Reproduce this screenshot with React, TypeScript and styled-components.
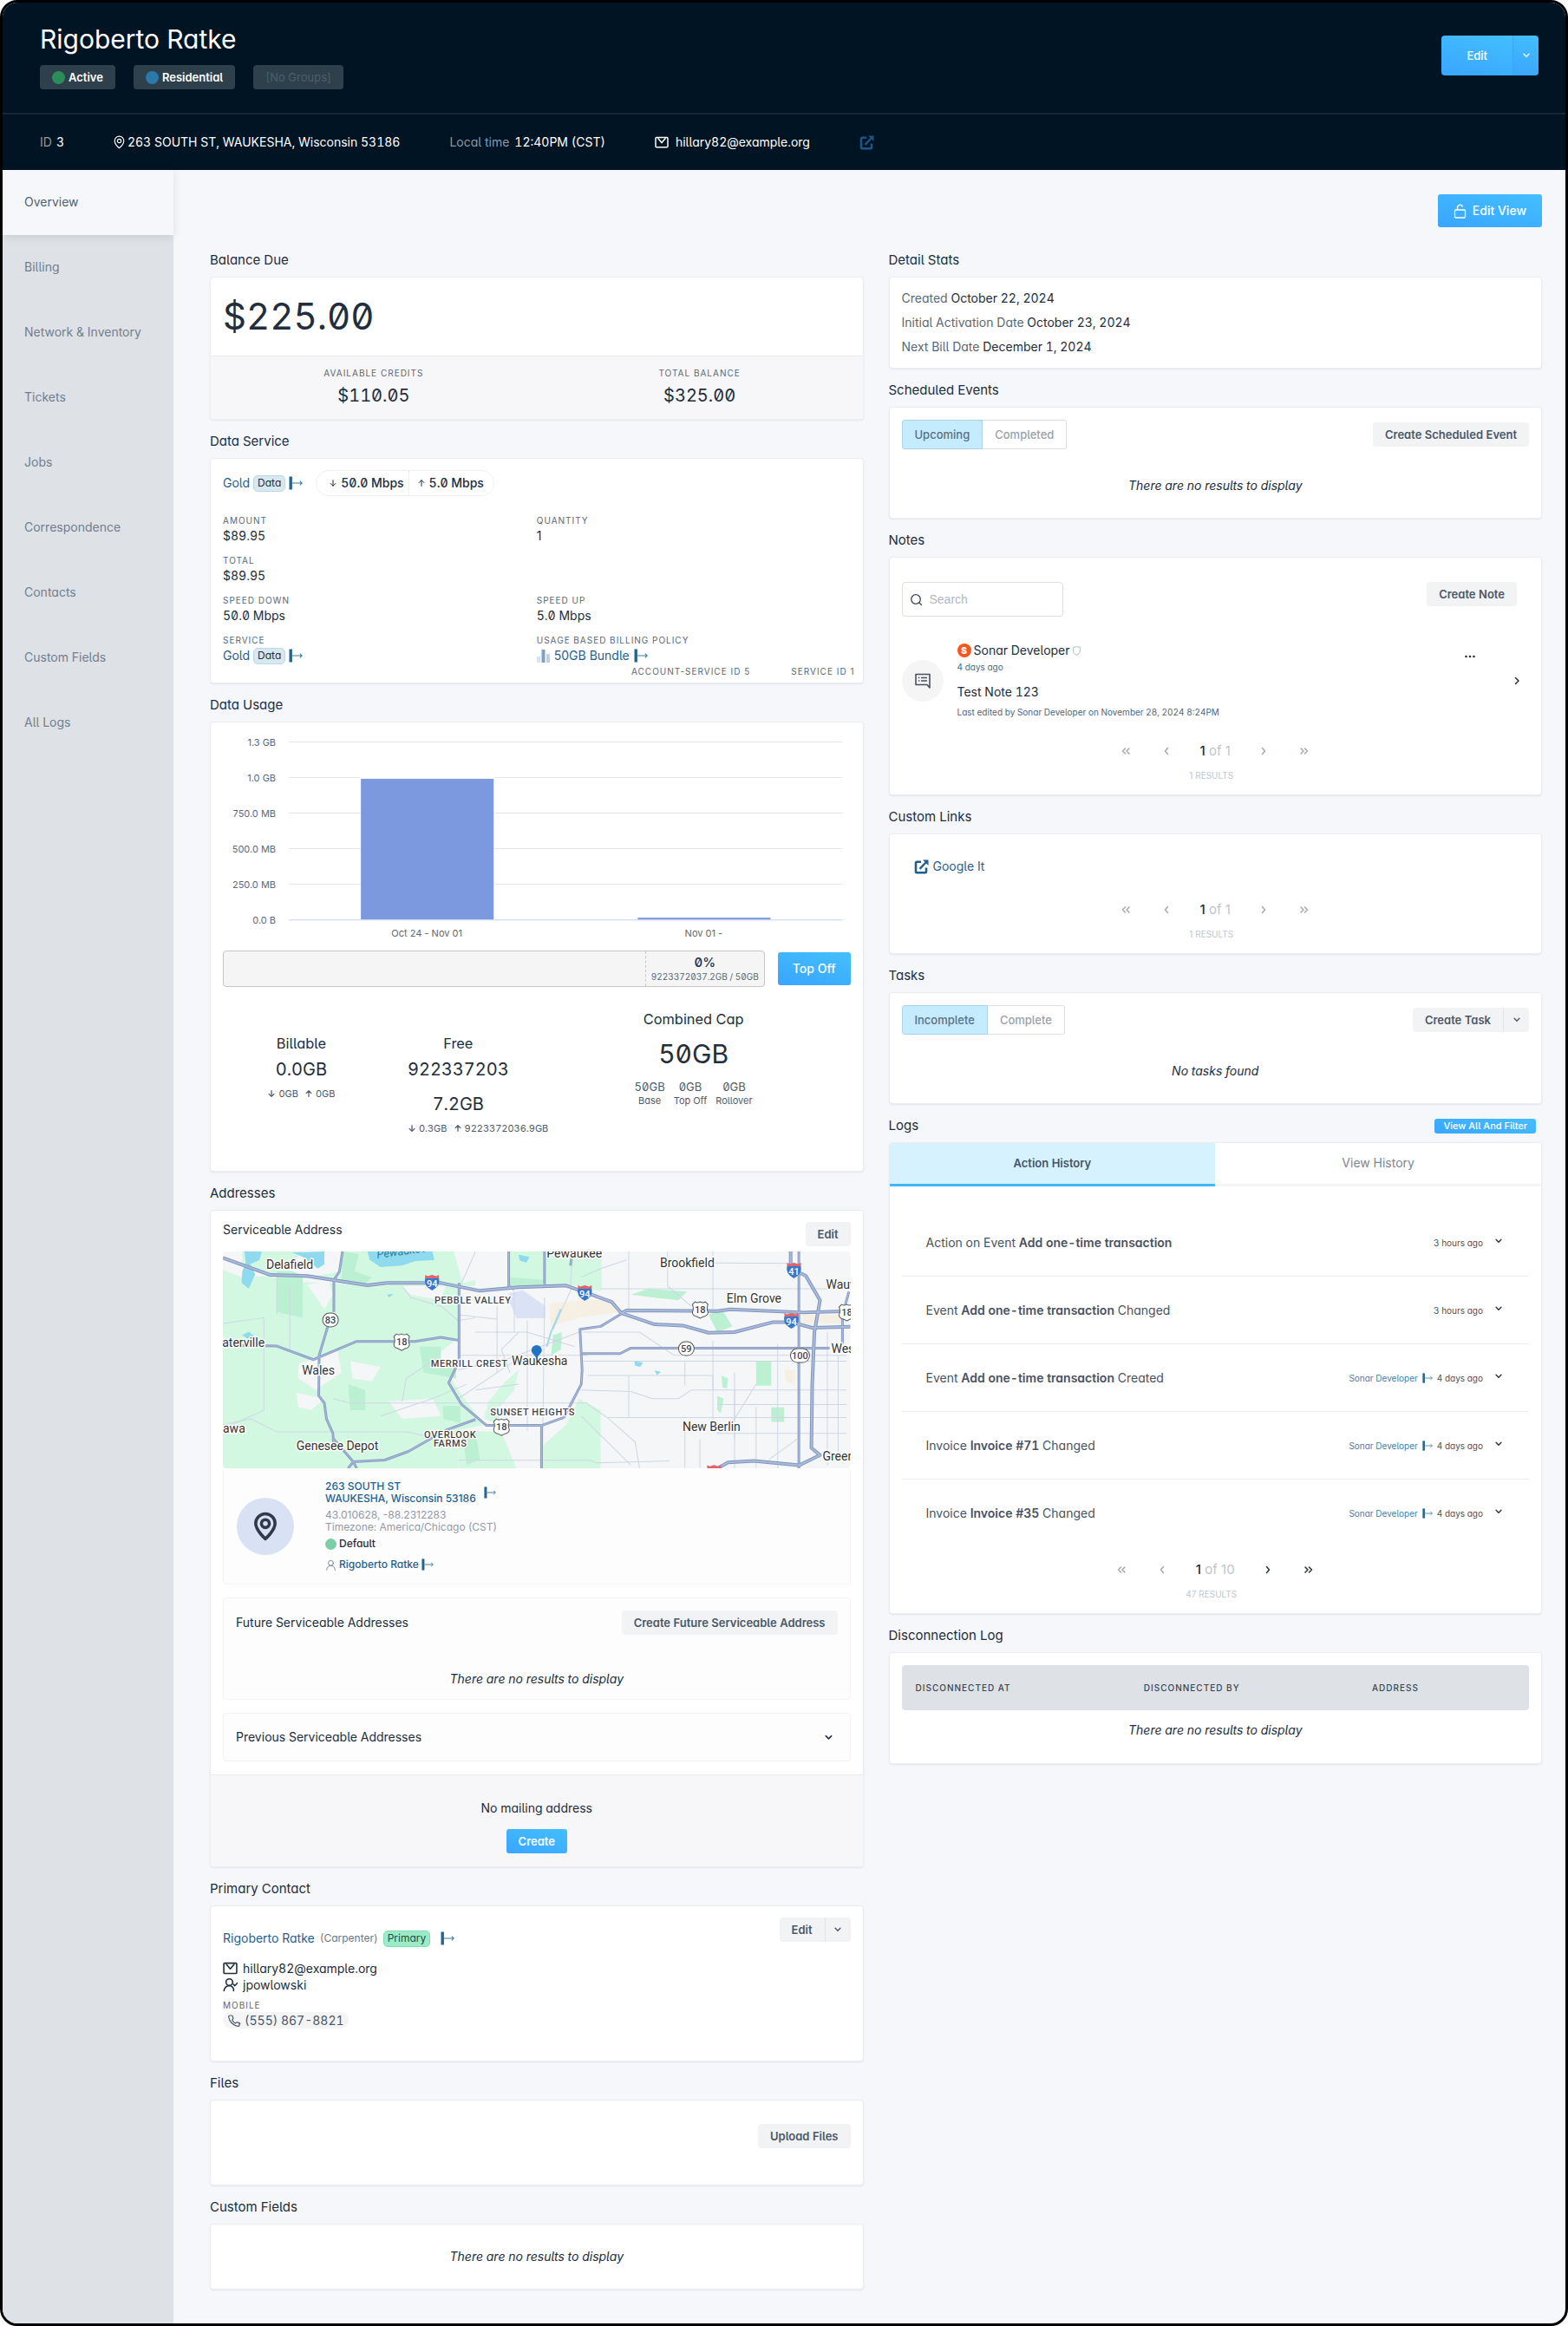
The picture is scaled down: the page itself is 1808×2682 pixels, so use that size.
import React from "react";
import styled, { createGlobalStyle, css } from "styled-components";

const GlobalStyle = createGlobalStyle`
  * { box-sizing: border-box; }
  html { background: #fff; }
  body {
    margin: 0;
    color: #222d3d;
    font-family: Inter, "Liberation Sans", sans-serif;
    font-feature-settings: "cv05", "cv11", "tnum";
    font-size: 14px;
    line-height: 20px;
    -webkit-font-smoothing: antialiased;
  }
  h1, h2, h3, p, ul, dl, dd { margin: 0; padding: 0; font-weight: 400; }
  ul { list-style: none; }
  button, input { font: inherit; font-feature-settings: inherit; }
  button { cursor: pointer; }
  a { color: #1f5f8f; text-decoration: none; }
  svg { display: block; flex: none; }
`;

const slashed = css`
  font-feature-settings: "cv05", "cv11", "tnum", "zero";
`;

const proportional = css`
  font-feature-settings: "cv05", "cv11";
`;

/* ---------- shell ---------- */

const Frame = styled.div`
  min-height: 100vh;
  display: flex;
  flex-direction: column;
  border: 3px solid #000;
  border-radius: 20px;
  overflow: hidden;
  background: #f6f7fb;
`;

const Header = styled.header`
  background: #001424;
  color: #fff;
`;

const HeaderTop = styled.div`
  display: flex;
  justify-content: space-between;
  align-items: center;
  padding: 21px 31px 27px 43px;
  border-bottom: 2px solid #15283a;
`;

const AccountName = styled.h1`
  font-size: 30px;
  line-height: 42px;
`;

const TagRow = styled.div`
  display: flex;
  gap: 21px;
  padding-top: 9px;
`;

const HeaderTag = styled.span<{ $muted?: boolean }>`
  display: flex;
  align-items: center;
  gap: 4px;
  height: 28px;
  padding: 0 14px;
  border-radius: 4px;
  background: #2e404b;
  color: ${(p) => (p.$muted ? "#4d5e6b" : "#fff")};
  font-size: 13px;
  font-weight: ${(p) => (p.$muted ? 400 : 600)};
`;

const Dot = styled.span<{ $color: string; $size: number }>`
  width: ${(p) => p.$size}px;
  height: ${(p) => p.$size}px;
  border-radius: 50%;
  background: ${(p) => p.$color};
`;

const InfoBar = styled.div`
  display: flex;
  align-items: center;
  gap: 57px;
  height: 64px;
  padding: 0 43px;
`;

const InfoItem = styled.span<{ $gap: number }>`
  display: flex;
  align-items: center;
  gap: ${(p) => p.$gap}px;
`;

const InfoLabel = styled.span`
  color: #8c98a4;
`;

const Body = styled.div`
  display: flex;
  flex: 1;
`;

const SideNav = styled.nav`
  width: 197px;
  flex: none;
  background: #dee1e6;
`;

const NavLink = styled.a<{ $active?: boolean }>`
  display: flex;
  align-items: center;
  height: 75px;
  padding: 0 0 2px 25px;
  color: ${(p) => (p.$active ? "#526071" : "#727f8c")};
  background: ${(p) => (p.$active ? "#f6f7fb" : "transparent")};
  box-shadow: ${(p) => (p.$active ? "0 2px 10px rgba(0, 0, 0, 0.1)" : "none")};
`;

const Main = styled.main`
  flex: 1;
  min-width: 0;
  padding: 28px 27px 39px 42px;
`;

const Toolbar = styled.div`
  display: flex;
  justify-content: flex-end;
  padding-bottom: 26px;
`;

const Columns = styled.div`
  display: grid;
  grid-template-columns: minmax(0, 1fr) minmax(0, 1fr);
  gap: 29px;
  align-items: start;
`;

const Column = styled.div`
  display: flex;
  flex-direction: column;
  gap: 13px;
`;

const SectionHead = styled.div`
  display: flex;
  align-items: center;
  justify-content: space-between;
  height: 24px;
  margin-bottom: 7px;
  padding-right: 7px;
`;

const SectionTitle = styled.h2`
  font-size: 15px;
  line-height: 24px;
`;

const Card = styled.div`
  border: 1px solid #ebedf0;
  border-radius: 4px;
  background: #fff;
  box-shadow: 0 1px 2px rgba(20, 30, 50, 0.08);
  overflow: hidden;
`;

const Padded = styled.div<{ $top: number; $bottom: number }>`
  padding: ${(p) => p.$top}px 14px ${(p) => p.$bottom}px;
`;

/* ---------- controls ---------- */

const blue = css`
  border: 0;
  color: #fff;
  background: linear-gradient(15deg, #3aa5ff, #43bfff);
`;

const PrimaryButton = styled.button<{ $height: number; $pad: number; $size?: number }>`
  ${blue}
  display: inline-flex;
  align-items: center;
  justify-content: center;
  gap: 7px;
  flex: none;
  height: ${(p) => p.$height}px;
  padding: 0 ${(p) => p.$pad}px;
  border-radius: 3px;
  font-size: ${(p) => p.$size ?? 14}px;
  font-weight: ${(p) => (p.$size === 13 ? 600 : 500)};
`;

const SplitGroup = styled.div<{ $blue?: boolean }>`
  display: flex;
  flex: none;
  height: ${(p) => (p.$blue ? 46 : 28)}px;
  border-radius: 4px;
  overflow: hidden;
  button {
    display: flex;
    align-items: center;
    justify-content: center;
    border: 0;
    font-size: 13px;
    ${(p) =>
      p.$blue
        ? css`
            ${blue}
            font-weight: 500;
          `
        : css`
            background: #f2f3f5;
            color: #4a5868;
            font-weight: 600;
          `}
  }
  button:first-child { padding: 0 ${(p) => (p.$blue ? 29 : 14)}px; }
  button:last-child {
    width: 30px;
    padding: 0;
    border-left: 1px solid ${(p) => (p.$blue ? "#3aa6fa" : "#e3e5e8")};
  }
`;

const GreyButton = styled.button`
  flex: none;
  height: 28px;
  padding: 0 14px;
  border: 0;
  border-radius: 4px;
  background: #f2f3f5;
  color: #4a5868;
  font-size: 13px;
  font-weight: 600;
`;

const Toggle = styled.div`
  display: flex;
  height: 34px;
`;

const ToggleItem = styled.button<{ $active?: boolean }>`
  padding: 0 14px;
  border: 1px solid ${(p) => (p.$active ? "#a9d3ea" : "#dcdfe4")};
  color: ${(p) => (p.$active ? "#5b7083" : "#9aa1a9")};
  background: ${(p) => (p.$active ? "#c5ebff" : "#fff")};
  border-radius: ${(p) => (p.$active ? "3px 0 0 3px" : "0 3px 3px 0")};
  border-left-width: ${(p) => (p.$active ? 1 : 0)}px;
  font-size: 13px;
  font-weight: 500;
`;

const Bar = styled.div<{ $align?: string; $gap?: number }>`
  display: flex;
  justify-content: space-between;
  align-items: ${(p) => p.$align ?? "center"};
  gap: ${(p) => p.$gap ?? 0}px;
`;

const EmptyText = styled.p<{ $gap?: number }>`
  padding-top: ${(p) => p.$gap ?? 0}px;
  text-align: center;
  font-style: italic;
  font-size: 14px;
  line-height: 20px;
`;

const Label = styled.span<{ $tight?: boolean }>`
  ${(p) => p.$tight && proportional}
  display: block;
  color: #5a6877;
  font-size: 10px;
  line-height: 16px;
  letter-spacing: 1px;
  text-transform: uppercase;
`;

const PlainIconButton = styled.button<{ $faded?: boolean }>`
  display: flex;
  align-items: center;
  justify-content: center;
  padding: 0;
  border: 0;
  background: none;
  color: ${(p) => (p.$faded ? "#a3a9b1" : "#26323f")};
`;

/* ---------- icons ---------- */

type StrokeProps = { size?: number; color?: string; width?: number; d: string };
const Stroke = ({ size = 16, color = "currentColor", width = 2, d }: StrokeProps) => (
  <svg width={size} height={size} viewBox="0 0 24 24" fill="none" stroke={color}
    strokeWidth={width} strokeLinecap="round" strokeLinejoin="round" aria-hidden="true">
    <path d={d} />
  </svg>
);

const CHEVRON_DOWN = "M5 8l7 7 7-7";
const Chevron = ({ size = 10 }: { size?: number }) => <Stroke size={size} width={3.4} d={CHEVRON_DOWN} />;

const GoIcon = ({ size = 16 }: { size?: number }) => (
  <svg width={size} height={size} viewBox="0 0 16 16" aria-hidden="true">
    <rect x="0.5" y="0.5" width="3.4" height="15" fill="#24648f" />
    <path d="M4 8H15M12.800 5.600L15.200 8l-2.400 2.400" fill="none" stroke="#3f7ca6" strokeWidth="1.100" />
  </svg>
);

const PinIcon = ({ size, height, color, width }: { size: number; height: number; color: string; width: number }) => (
  <svg width={size} height={height} viewBox="0 0 26 32" fill="none" stroke={color} strokeWidth={width} aria-hidden="true">
    <path d="M13 29.500C13 29.500 2.500 20.400 2.500 12.800a10.500 10.500 0 0 1 21 0C23.500 20.400 13 29.500 13 29.500Z" strokeLinejoin="round" />
    <circle cx="13" cy="13" r="4.300" />
  </svg>
);

const MailIcon = ({ size = 16 }: { size?: number }) => (
  <svg width={size} height={size} viewBox="0 0 16 16" fill="none" stroke="currentColor" strokeWidth="1.500" strokeLinejoin="round" aria-hidden="true">
    <rect x="1" y="2.500" width="14" height="11.200" rx="1" />
    <path d="M3.500 3.200L8 8.600l4.500-5.400" />
  </svg>
);

const ExternalIcon = ({ color, size = 17 }: { color: string; size?: number }) => (
  <svg width={size} height={size} viewBox="0 0 17 17" fill="none" stroke={color} aria-hidden="true">
    <path d="M8 2.800H3.200a1.200 1.200 0 0 0-1.200 1.200v10a1.200 1.200 0 0 0 1.200 1.200h9.600a1.200 1.200 0 0 0 1.200-1.200V9.500" strokeWidth="2.600" />
    <path d="M6.500 10.800L13.500 3.500" strokeWidth="2.400" />
    <path d="M10 0.500h6.500V7z" fill={color} stroke="none" />
  </svg>
);

const UserIcon = ({ check, size = 14, width = 1.2 }: { check?: boolean; size?: number; width?: number }) => (
  <svg width={size} height={size} viewBox="0 0 16 16" fill="none" stroke="currentColor" strokeWidth={width} strokeLinecap="round" aria-hidden="true">
    <circle cx={check ? 7 : 8} cy="5.200" r="3.600" />
    <path d={check ? "M1.200 14.500c.6-3.400 2.400-5.400 5.800-5.600 2.400.1 3.800 1.400 4.600 3.600v2" : "M2 15c.5-4 2.800-6 6-6s5.500 2 6 6"} />
    {check && <path d="M11.500 7.600l1.500 1.500 2.500-2.800" />}
  </svg>
);

const LockIcon = () => (
  <svg width="15" height="17" viewBox="0 0 15 17" fill="none" stroke="#fff" strokeWidth="1.300" aria-hidden="true">
    <rect x="1.500" y="7" width="12" height="9" rx="1" />
    <path d="M4.500 7V4.200a3 3 0 0 1 5.800-1" strokeLinecap="round" />
  </svg>
);

const ARROW_DOWN = "M12 4v16M5 13l7 7 7-7";
const ARROW_UP = "M12 20V4M5 11l7-7 7 7";

/* ---------- small shared pieces ---------- */

const Section = ({ title, action, children }: { title: string; action?: React.ReactNode; children: React.ReactNode }) => (
  <section>
    <SectionHead>
      <SectionTitle>{title}</SectionTitle>
      {action}
    </SectionHead>
    <Card>{children}</Card>
  </section>
);

const Chip = styled.span<{ $green?: boolean }>`
  display: inline-flex;
  align-items: center;
  height: 19px;
  padding: 0 4px;
  border-radius: 5px;
  font-size: 12px;
  border: 1px solid ${(p) => (p.$green ? "#7fdcb3" : "#bfd8e3")};
  background: ${(p) => (p.$green ? "#9aecc8" : "#d6e8f0")};
  color: ${(p) => (p.$green ? "#1f4d3c" : "#222d3d")};
`;

const Inline = styled.span<{ $gap: number; $size?: number }>`
  display: flex;
  align-items: center;
  gap: ${(p) => p.$gap}px;
  font-size: ${(p) => p.$size ?? 14}px;
`;

const ServiceLink = () => (
  <Inline $gap={4}>
    <a href="#gold">Gold</a>
    <Chip>Data</Chip>
    <GoIcon />
  </Inline>
);

const Pager = styled.div`
  ${proportional}
  display: flex;
  flex-direction: column;
  align-items: center;
  gap: 9px;
`;

const PagerRow = styled.div`
  display: flex;
  height: 24px;
  ${PlainIconButton} { width: 47px; }
`;

const PagerText = styled.span`
  padding: 0 15px;
  color: #bfc4ca;
  font-size: 15px;
  line-height: 24px;
  b { color: #222d3d; font-weight: 500; }
`;

const PagerCount = styled.span`
  padding-right: 9px;
  color: #c2c6cd;
  font-size: 10px;
  line-height: 14px;
`;

const Pagination = ({ pages, results, open }: { pages: number; results: number; open?: boolean }) => (
  <Pager>
    <PagerRow>
      <PlainIconButton $faded aria-label="First page"><Stroke size={12} width={3} d="M11 6l-6 6 6 6M20 6l-6 6 6 6" /></PlainIconButton>
      <PlainIconButton $faded aria-label="Previous page"><Stroke size={12} width={3} d="M15 5l-6 7 6 7" /></PlainIconButton>
      <PagerText><b>1</b> of {pages}</PagerText>
      <PlainIconButton $faded={!open} aria-label="Next page"><Stroke size={12} width={3} d="M9 5l6 7-6 7" /></PlainIconButton>
      <PlainIconButton $faded={!open} aria-label="Last page"><Stroke size={12} width={3} d="M4 6l6 6-6 6M13 6l6 6-6 6" /></PlainIconButton>
    </PagerRow>
    <PagerCount>{results} RESULTS</PagerCount>
  </Pager>
);

/* ---------- balance ---------- */

const Amount = styled.div`
  ${slashed}
  padding: 15px 14px;
  font-size: 42px;
  line-height: 60px;
`;

const Totals = styled.dl`
  display: grid;
  grid-template-columns: 1fr 1fr;
  padding: 11px 0 15px;
  border-top: 1px solid #e9ebee;
  background: #f7f7f9;
  text-align: center;
  dd {
    ${slashed}
    padding-top: 6px;
    font-size: 20px;
    line-height: 24px;
  }
`;

const Balance = () => (
  <Section title="Balance Due">
    <Amount>$225.00</Amount>
    <Totals>
      <div><dt><Label $tight>Available credits</Label></dt><dd>$110.05</dd></div>
      <div><dt><Label $tight>Total balance</Label></dt><dd>$325.00</dd></div>
    </Totals>
  </Section>
);

/* ---------- data service ---------- */

const ServiceHead = styled.div`
  display: flex;
  align-items: center;
  gap: 15px;
  padding-bottom: 20px;
`;

const SpeedPill = styled.div`
  ${slashed}
  display: flex;
  height: 30px;
  border: 1px solid #eff0f2;
  border-radius: 15px;
  font-weight: 500;
  span { display: flex; align-items: center; gap: 4px; padding: 0 5px 0 14px; }
  span + span { padding: 0 11px 0 9px; border-left: 1px dotted #dfe2e6; }
`;

const Fields = styled.dl`
  display: grid;
  grid-template-columns: 1fr 1fr;
  row-gap: 10px;
`;

const Field = styled.div<{ $wide?: boolean; $plain?: boolean }>`
  grid-column: ${(p) => (p.$wide ? "1 / -1" : "auto")};
  dd { ${(p) => (p.$plain ? proportional : slashed)} height: 20px; }
`;

const IdLine = styled.div`
  display: flex;
  justify-content: flex-end;
  gap: 47px;
  padding-right: 9px;
  padding-bottom: 5px;
`;

const PolicyIcon = () => (
  <svg width="15" height="16" viewBox="0 0 15 16" aria-hidden="true">
    <rect x="0" y="9" width="4" height="7" fill="#dbe4ec" />
    <rect x="5.500" y="1" width="4" height="15" fill="#7fa3be" />
    <rect x="11" y="6" width="4" height="10" fill="#c0d2df" />
  </svg>
);

const DataService = () => (
  <Section title="Data Service">
    <Padded $top={13} $bottom={0}>
      <ServiceHead>
        <ServiceLink />
        <SpeedPill>
          <span><Stroke size={10} d={ARROW_DOWN} width={2.4} />50.0 Mbps</span>
          <span><Stroke size={10} d={ARROW_UP} width={2.4} />5.0 Mbps</span>
        </SpeedPill>
      </ServiceHead>
      <Fields>
        <Field><dt><Label>Amount</Label></dt><dd>$89.95</dd></Field>
        <Field $plain><dt><Label>Quantity</Label></dt><dd>1</dd></Field>
        <Field $wide><dt><Label>Total</Label></dt><dd>$89.95</dd></Field>
        <Field><dt><Label>Speed down</Label></dt><dd>50.0 Mbps</dd></Field>
        <Field><dt><Label>Speed up</Label></dt><dd>5.0 Mbps</dd></Field>
        <Field><dt><Label>Service</Label></dt><dd><ServiceLink /></dd></Field>
        <Field $plain>
          <dt><Label>Usage based billing policy</Label></dt>
          <dd><Inline $gap={5}><PolicyIcon /><a href="#policy">50GB Bundle</a><GoIcon /></Inline></dd>
        </Field>
      </Fields>
    </Padded>
    <IdLine>
      <Label $tight>Account-service ID 5</Label>
      <Label $tight>Service ID 1</Label>
    </IdLine>
  </Section>
);

/* ---------- data usage ---------- */

const ChartSvg = styled.svg`
  ${proportional}
  width: 100%;
  height: auto;
  text { fill: #63686f; font-size: 11px; }
`;

const TICKS = ["1.3 GB", "1.0 GB", "750.0 MB", "500.0 MB", "250.0 MB", "0.0 B"];

const UsageChart = () => (
  <ChartSvg viewBox="0 0 723 240" role="img" aria-label="Data usage by period">
    {TICKS.map((t, i) => (
      <g key={t}>
        <line x1="76" x2="714" y1={8.5 + 41 * i} y2={8.5 + 41 * i} stroke={i === 5 ? "#c3d0f0" : "#e3e5e8"} />
        <text x="61" y={12.5 + 41 * i} textAnchor="end">{t}</text>
      </g>
    ))}
    <rect x="158" y="49" width="155" height="164" fill="#fff" />
    <rect x="159" y="51" width="153" height="162" fill="#7c99e0" />
    <rect x="478" y="211" width="153" height="2" fill="#7c99e0" />
    <text x="235" y="233" textAnchor="middle">Oct 24 - Nov 01</text>
    <text x="554" y="233" textAnchor="middle">Nov 01 -</text>
  </ChartSvg>
);

const Meter = styled.div`
  display: flex;
  justify-content: flex-end;
  flex: 1;
  height: 42px;
  border: 1px solid #c4c6c9;
  border-radius: 4px;
  background: #f5f5f6;
`;

const MeterText = styled.div`
  ${slashed}
  display: flex;
  flex-direction: column;
  justify-content: center;
  padding: 0 6px;
  border-left: 1px dashed #c4c6c9;
  text-align: center;
  color: #5a6877;
  font-size: 10px;
  line-height: 14px;
  b { color: #222d3d; font-size: 15px; font-weight: 500; line-height: 18px; }
`;

const Stats = styled.div`
  display: grid;
  grid-template-columns: minmax(0, 1fr) minmax(0, 1fr) minmax(0, 2fr);
  padding: 27px 0 41px;
  text-align: center;
`;

const Stat = styled.div`
  padding: 28px 32px 0;
`;

const StatValue = styled.div`
  font-size: 20px;
  line-height: 40px;
  word-break: break-all;
`;

const Traffic = styled.div`
  display: flex;
  justify-content: safe center;
  gap: 7px;
  color: #4d5b6b;
  font-size: 11px;
  line-height: 16px;
  white-space: nowrap;
  span { display: flex; align-items: center; gap: 3px; }
`;

const CapValue = styled.div`
  ${slashed}
  font-size: 30px;
  line-height: 60px;
`;

const CapParts = styled.dl`
  display: flex;
  justify-content: center;
  gap: 10px;
  div { display: flex; flex-direction: column-reverse; }
  dt { color: #4d5b6b; font-size: 11px; line-height: 16px; }
  dd { ${slashed} color: #4d5b6b; font-size: 13px; line-height: 16px; }
`;

const TrafficLine = ({ down, up }: { down: string; up: string }) => (
  <Traffic>
    <span><Stroke size={10} width={3} d={ARROW_DOWN} />{down}</span>
    <span><Stroke size={10} width={3} d={ARROW_UP} />{up}</span>
  </Traffic>
);

const DataUsage = () => (
  <Section title="Data Usage">
    <Padded $top={14} $bottom={0}>
      <UsageChart />
    </Padded>
    <Padded $top={9} $bottom={0}>
      <Bar $gap={15}>
        <Meter><MeterText><b>0%</b><span>9223372037.2GB / 50GB</span></MeterText></Meter>
        <PrimaryButton $height={38} $pad={17}>Top Off</PrimaryButton>
      </Bar>
      <Stats>
        <Stat>
          <h3>Billable</h3>
          <StatValue>0.0GB</StatValue>
          <TrafficLine down="0GB" up="0GB" />
        </Stat>
        <Stat>
          <h3>Free</h3>
          <StatValue>9223372037.2GB</StatValue>
          <TrafficLine down="0.3GB" up="9223372036.9GB" />
        </Stat>
        <div>
          <h3>Combined Cap</h3>
          <CapValue>50GB</CapValue>
          <CapParts>
            <div><dt>Base</dt><dd>50GB</dd></div>
            <div><dt>Top Off</dt><dd>0GB</dd></div>
            <div><dt>Rollover</dt><dd>0GB</dd></div>
          </CapParts>
        </div>
      </Stats>
    </Padded>
  </Section>
);

/* ---------- map ---------- */

const MapSvg = styled.svg`
  width: 100%;
  height: auto;
  border-radius: 4px;
  font-family: Roboto, sans-serif;
  font-feature-settings: normal;
`;

const GREENS = [
  "M55 345L100 370 160 366 205 385 300 390 390 400 600 395 600 580 550 640 600 760 660 880 600 900 600 1031 55 1031Z",
  "M100 281H640V400H400L300 380 160 360 100 330Z",
  "M720 281H932V420L880 400 850 395 720 400Z",
  "M880 790L930 830V1031H790V960L850 880Z",
  "M600 900L700 905 735 1031H600Z",
  "M670 800L710 730 740 690 730 760 690 830 700 880 660 860Z",
];
const DARK_GREENS = [
  "M180 350H240V510L180 490Z", "M330 281L370 290 360 350 400 370 380 400 330 390Z",
  "M510 610H560V660H595V720L520 700Z", "M345 740L385 760V830H350Z", "M1040 410L1130 420 1110 450 1050 440 1000 430Z",
  "M1290 660H1325V745H1290Z", "M1325 820H1355V870H1325Z", "M1180 500L1210 480 1235 540 1200 560Z",
  "M610 920L640 900 650 1000 620 1020Z", "M820 570L840 560 838 620 815 640Z", "M565 815H605V875L565 860Z",
  "M1200 780L1215 790 1208 840 1200 830Z", "M1210 710L1225 720 1222 755 1212 750Z", "M720 370L800 380 790 400 720 400Z",
];
const PALE = [
  "M250 395L300 385 310 430 290 480Z", "M350 660L420 680 400 730 355 720Z", "M470 400L570 400 560 450 490 430Z",
  "M230 670L320 620 330 700 270 760 230 720Z", "M225 770L290 790 260 830 230 820Z", "M440 800L540 790 560 850 470 860Z",
  "M240 281L330 281 330 350 250 370 200 340Z", "M590 281L680 281 700 360 610 390Z",
];
const WATER = [
  "M105 281H145L140 310 118 325 130 360 115 410 98 390 100 350 108 320Z", "M215 285L290 281V325L275 340 240 300Z",
  "M390 281H540L545 310 500 315 470 330 420 335 395 310Z", "M435 430L450 428 440 440Z", "M100 570L115 558 128 575 115 585Z",
  "M1008 660L1028 665 1022 680 1010 676Z", "M1055 692L1070 698 1060 708Z", "M740 292L765 300 758 320 742 312Z",
];
const MINOR = [
  "M210 400V620M150 510L150 830 75 880M55 530L150 510M180 360V500M470 400L490 440 560 470 600 520 640 510",
  "M600 500L690 515M690 470V700M760 520V900M800 440L795 1030M730 420V560M640 560L760 560 870 610",
  "M600 640H900M600 690L720 650 880 560M740 650L600 790M640 760L740 740M350 805H900M55 880L120 860 180 905H480L560 930",
  "M310 790L350 805M550 650L480 720 470 800M420 850L540 790 620 740M640 281L605 400M865 281L860 400M865 400L820 550",
  "M885 370L930 340 990 310M995 281V480M1085 281V400L1140 470M1190 281V480M1085 320L1380 322M930 410H1500",
  "M890 560L1020 560 1100 640H1500M890 660H1500M900 710H1190V760M885 760L1000 765 1050 790 1110 790 1140 760H1500",
  "M995 710V855H1200M1240 700V930M1290 740L1240 860 1200 910H1500M1125 880V1030M1160 930V1030M1290 820V1030",
  "M900 810L945 855H1500M945 855L1010 940 1020 1031M885 850L1000 1020M1455 560V1020M1480 640V1000M1340 600V1031M1190 590V900M1125 660V745",
  "M1200 810H1500M1240 760V1031M1320 1000L1385 930M600 1003H905L920 1012 1090 1005M740 560L700 620 720 700",
];
const ROADS = [
  "M55 605L180 608 265 655 365 592H500L560 578 600 588", "M332 281L325 350 312 380V490M300 530L278 640 277 780 290 805 295 860 310 910 312 970",
  "M312 930L357 1008 430 1002 485 972 570 900 640 862M345 1031L357 1008 365 1031M602 390V660L578 735 608 810 665 882H795L845 855",
  "M845 855L885 740 887 690 882 550 930 540 985 490M800 281V400M717 281V400L730 412M888 634H975L1000 615H1460M793 882V1031",
  "M1389 281V1031M1505 420L1490 500V600M865 281L860 330",
];
const HIGHWAYS = [
  "M55 303L165 362 250 366 390 398 435 390H560L650 417 740 405 850 399 900 425 955 455 978 494 1055 533 1120 537 1180 562 1240 560 1330 525H1370L1420 545 1508 541",
  "M978 494L990 485 1200 487 1230 481 1400 492 1508 487", "M1370 281V340L1405 365 1438 450 1425 560 1420 740 1418 960 1438 985 1390 1020 1285 1005 1225 1010 1200 1031",
];

type Place = [string, number, number, number?];
const PLACES: Place[] = [
  ["Delafield", 77, 20], ["Pewaukee", 405, 7], ["Brookfield", 535, 18], ["Elm Grove", 612, 59], ["Wauwatosa", 695, 43, 1],
  ["Waterville", -13, 110, 1], ["Wales", 110, 142], ["Waukesha", 365, 131], ["New Berlin", 563, 207], ["awa", 0, 209, 1],
  ["Genesee Depot", 132, 229], ["West Allis", 701, 117, 1], ["Greenfield", 691, 241, 1],
];
const DISTRICTS: Place[] = [
  ["PEBBLE VALLEY", 288, 60], ["MERRILL CREST", 284, 133], ["SUNSET HEIGHTS", 357, 189], ["OVERLOOK", 262, 215], ["FARMS", 262, 225],
];
const ROUTES: Place[] = [
  ["83", 124, 79], ["18", 206, 104], ["18", 321, 202], ["18", 550, 67], ["59", 534, 112], ["100", 665, 120], ["18", 719, 70],
];
const INTERSTATES: Place[] = [["94", 241, 37], ["94", 417, 49], ["94", 655, 81], ["41", 658, 23], ["", 566, 256]];

const ServiceMap = () => (
  <MapSvg viewBox="0 0 723 250" role="img" aria-label="Map of Waukesha">
    <rect width="723" height="250" fill="#f5f6f7" />
    <g transform="scale(.4975 .3333) translate(-55 -281)" fill="none">
      {GREENS.map((d) => <path key={d} d={d} fill="#d3f8e2" />)}
      {DARK_GREENS.map((d) => <path key={d} d={d} fill="#bcf0d2" />)}
      {PALE.map((d) => <path key={d} d={d} fill="#f5f6f7" />)}
      {WATER.map((d) => <path key={d} d={d} fill="#8fdaee" />)}
      <path d="M718 425L750 415 802 470V512H735L720 460Z" fill="#dbe2f6" />
      <path d="M810 460L890 450 960 445 978 490 880 510 815 540Z" fill="#f6efe3" />
      <path d="M1395 500H1500V530H1395ZM1355 690H1380V745L1360 730Z" fill="#f6efe3" />
      {MINOR.map((d) => <path key={d} d={d} stroke="#cdd7e3" strokeWidth="1" vectorEffect="non-scaling-stroke" />)}
      <path d="M838 480L815 560 805 610" stroke="#9fd9ea" strokeWidth="2" vectorEffect="non-scaling-stroke" />
      {ROADS.map((d) => <path key={d} d={d} stroke="#8b9dc3" strokeWidth="3" strokeLinejoin="round" vectorEffect="non-scaling-stroke" />)}
      {HIGHWAYS.map((d) => <path key={d} d={d} stroke="#8295bd" strokeWidth="4" strokeLinejoin="round" vectorEffect="non-scaling-stroke" />)}
      {[...ROADS, ...HIGHWAYS].map((d, i) => (
        <path key={d} d={d} stroke="#a9badb" strokeWidth={i < ROADS.length ? 1 : 2} strokeLinejoin="round" vectorEffect="non-scaling-stroke" />
      ))}
    </g>
    <text x="178" y="8" fontSize="13" fontStyle="italic" fill="#2f7f97" transform="rotate(-8 178 8)">Pewaukee</text>
    <g fontSize="14" fill="#333" stroke="#fff" strokeWidth="3" paintOrder="stroke" strokeLinejoin="round">
      {PLACES.map(([t, x, y, start]) => (
        <text key={t} x={x} y={y} textAnchor={start ? "start" : "middle"}>{t}</text>
      ))}
    </g>
    <g fontSize="11" fontWeight="500" letterSpacing="0.6" fill="#444" stroke="#fff" strokeWidth="2.500" paintOrder="stroke" textAnchor="middle">
      {DISTRICTS.map(([t, x, y]) => <text key={t} x={x} y={y}>{t}</text>)}
    </g>
    <g fontSize="11" fontWeight="500" textAnchor="middle">
      {ROUTES.map(([t, x, y], i) => (
        <g key={i}>
          {t === "18" ? (
            <path d={`M${x - 9} ${y - 6}l3-3q3 2 6 0q3 2 6 0l3 3q-2 5 0 9q0 4-5 5l-4 2l-4-2q-5-1-5-5q2-4 0-9z`} fill="#fff" stroke="#555" />
          ) : (
            <rect x={x - (t.length > 2 ? 11 : 9)} y={y - 8} width={t.length > 2 ? 22 : 18} height="16" rx="8" fill="#fff" stroke="#555" />
          )}
          <text x={x} y={y + 4} fill="#444">{t}</text>
        </g>
      ))}
      {INTERSTATES.map(([t, x, y], i) => (
        <g key={i}>
          <path d={`M${x - 8} ${y - 6}h16q2 9-8 14q-10-5-8-14z`} fill="#3877cb" />
          <path d={`M${x - 8} ${y - 10}l3 1.500l5-1.500l5 1.500l3-1.500v4h-16z`} fill="#e0646a" />
          <text x={x} y={y + 4} fill="#fff">{t}</text>
        </g>
      ))}
    </g>
    <path d="M361.500 125c-1-6-6-7-6-11a6 6 0 0 1 12 0c0 4-5 5-6 11z" fill="#2174c4" />
  </MapSvg>
);

/* ---------- addresses ---------- */

const SubTitle = styled.h3`
  font-size: 14px;
  line-height: 18px;
`;

const SubCard = styled.div<{ $attached?: boolean; $pad: string }>`
  margin-top: ${(p) => (p.$attached ? 0 : 15)}px;
  padding: ${(p) => p.$pad};
  border: 1px solid #f2f3f4;
  border-top-width: ${(p) => (p.$attached ? 0 : 1)}px;
  border-radius: 4px;
  background: #fdfdfd;
`;

const AddressRow = styled.div`
  ${proportional}
  display: flex;
  align-items: center;
  gap: 36px;
  font-size: 12px;
`;

const PinCircle = styled.div`
  display: grid;
  place-items: center;
  width: 66px;
  height: 66px;
  border-radius: 50%;
  background: #d9e1f5;
`;

const AddressText = styled.div`
  line-height: 14px;
  a { font-weight: 500; }
`;

const Geo = styled.div`
  padding: 5px 0 4px;
  color: #929aa8;
`;

const AddressMeta = styled(Inline)`
  height: 16px;
  font-weight: 500;
  & + & { margin-top: 8px; color: #7a8794; }
`;

const Mailing = styled.div`
  display: flex;
  flex-direction: column;
  align-items: center;
  gap: 14px;
  margin-top: 15px;
  padding: 28px 0 15px;
  border-top: 1px solid #e9ebee;
  background: #f7f7f9;
`;

const MapWrap = styled.div`
  padding-top: 6px;
`;

const CollapseButton = styled(PlainIconButton)`
  width: 20px;
  height: 18px;
`;

const Addresses = () => (
  <Section title="Addresses">
    <Padded $top={13} $bottom={0}>
      <Bar $align="flex-start">
        <SubTitle>Serviceable Address</SubTitle>
        <GreyButton>Edit</GreyButton>
      </Bar>
      <MapWrap><ServiceMap /></MapWrap>
      <SubCard $attached $pad="14px 15px">
        <AddressRow>
          <PinCircle><PinIcon size={28} height={34} color="#2f3b49" width={3.4} /></PinCircle>
          <AddressText>
            <Inline $gap={9} $size={12}>
              <a href="#address">263 SOUTH ST<br />WAUKESHA, Wisconsin 53186</a>
              <GoIcon size={14} />
            </Inline>
            <Geo>43.010628, -88.2312283<br />Timezone: America/Chicago (CST)</Geo>
            <AddressMeta $gap={3} $size={12}><Dot $color="#7ccfa5" $size={13} />Default</AddressMeta>
            <AddressMeta $gap={3} $size={12}><UserIcon size={13} /><a href="#account">Rigoberto Ratke</a><GoIcon size={14} /></AddressMeta>
          </AddressText>
        </AddressRow>
      </SubCard>
      <SubCard $pad="14px 14px 13px">
        <Bar>
          <SubTitle>Future Serviceable Addresses</SubTitle>
          <GreyButton>Create Future Serviceable Address</GreyButton>
        </Bar>
        <EmptyText $gap={41}>There are no results to display</EmptyText>
      </SubCard>
      <SubCard $pad="18px 14px">
        <Bar>
          <SubTitle>Previous Serviceable Addresses</SubTitle>
          <CollapseButton aria-label="Show previous addresses"><Chevron size={11} /></CollapseButton>
        </Bar>
      </SubCard>
    </Padded>
    <Mailing>
      <p>No mailing address</p>
      <PrimaryButton $height={28} $pad={14} $size={13}>Create</PrimaryButton>
    </Mailing>
  </Section>
);

/* ---------- contact, files, custom fields ---------- */

const ContactName = styled(Inline)`
  height: 20px;
  margin-bottom: 15px;
`;

const ContactInfo = styled.div`
  padding-top: 14px;
`;

const ContactLine = styled(Inline)`
  height: 19px;
`;

const MobileLabel = styled(Label)`
  padding-top: 6px;
`;

const PhonePill = styled.div`
  display: flex;
  align-items: center;
  gap: 4px;
  width: fit-content;
  height: 19px;
  padding: 0 5px;
  border-radius: 10px;
  background: #f5f5f6;
  color: #4a5868;
`;

const PHONE =
  "M21 16.500v3a2 2 0 0 1-2.200 2A19 19 0 0 1 2.500 5.200 2 2 0 0 1 4.500 3h3a2 2 0 0 1 2 1.700c.1 1 .4 1.900.7 2.800a2 2 0 0 1-.5 2.100L8.500 10.900a15 15 0 0 0 5.600 5.600l1.300-1.200a2 2 0 0 1 2.100-.5c.9.3 1.800.6 2.800.7a2 2 0 0 1 1.700 2z";

const Muted = styled.span`
  color: #6b7784;
  font-size: 12px;
`;

const SplitButton = ({ label, primary }: { label: string; primary?: boolean }) => (
  <SplitGroup $blue={primary}>
    <button>{label}</button>
    <button aria-label={`More options for ${label}`}><Chevron /></button>
  </SplitGroup>
);

const PrimaryContact = () => (
  <Section title="Primary Contact">
    <Padded $top={13} $bottom={37}>
      <Bar $align="flex-start">
        <ContactInfo>
          <ContactName $gap={6}>
            <a href="#contact">Rigoberto Ratke</a>
            <Muted>(Carpenter)</Muted>
            <Chip $green>Primary</Chip>
            <span />
            <GoIcon />
          </ContactName>
          <ContactLine $gap={6}><MailIcon size={17} />hillary82@example.org</ContactLine>
          <ContactLine $gap={6}><UserIcon check size={17} width={1.5} />jpowlowski</ContactLine>
          <MobileLabel>Mobile</MobileLabel>
          <PhonePill><Stroke size={16} width={1.8} d={PHONE} />(555) 867-8821</PhonePill>
        </ContactInfo>
        <SplitButton label="Edit" />
      </Bar>
    </Padded>
  </Section>
);

const FilesBar = styled.div`
  display: flex;
  justify-content: flex-end;
`;

/* ---------- right column ---------- */

const StatLine = styled.p`
  line-height: 28px;
  span { color: #5a6877; }
`;

const DetailStats = () => (
  <Section title="Detail Stats">
    <Padded $top={10} $bottom={10}>
      <StatLine><span>Created</span> October 22, 2024</StatLine>
      <StatLine><span>Initial Activation Date</span> October 23, 2024</StatLine>
      <StatLine><span>Next Bill Date</span> December 1, 2024</StatLine>
    </Padded>
  </Section>
);

const SearchBox = styled.label`
  display: flex;
  align-items: center;
  gap: 8px;
  width: 186px;
  height: 40px;
  padding: 0 8px;
  border: 1px solid #dcdfe6;
  border-radius: 4px;
  input {
    width: 100%;
    min-width: 0;
    padding: 0;
    border: 0;
    outline: 0;
    background: none;
    font-family: "Liberation Sans", Arial, sans-serif;
    font-size: 14px;
    &::placeholder { color: #b3b7bd; opacity: 1; }
  }
`;

const NotesBar = styled(Bar)`
  padding-right: 14px;
`;

const NoteRow = styled.article`
  display: flex;
  align-items: center;
  margin: 30px 0 25px;
`;

const NoteCircle = styled.div`
  display: grid;
  place-items: center;
  width: 48px;
  height: 48px;
  margin-right: 16px;
  border-radius: 50%;
  background: #f5f5f6;
  color: #4a5160;
`;

const NoteText = styled.div`
  flex: 1;
`;

const NoteAuthor = styled(Inline)`
  height: 18px;
`;

const Avatar = styled.span`
  display: grid;
  place-items: center;
  width: 16px;
  height: 16px;
  border-radius: 50%;
  background: #f9561f;
  color: #fff;
  font-size: 10px;
  font-weight: 900;
  line-height: 16px;
`;

const NoteSmall = styled.p<{ $top: number }>`
  padding-top: ${(p) => p.$top}px;
  color: #56657a;
  font-size: 10px;
  line-height: 16px;
`;

const NoteBody = styled.p`
  padding-top: 11px;
`;

const NoteActions = styled.div`
  display: flex;
  align-self: stretch;
  align-items: center;
  gap: 40px;
  padding-right: 8px;
  ${PlainIconButton}:first-child { align-self: flex-start; padding-top: 8px; }
`;

const Notes = () => (
  <Section title="Notes">
    <Padded $top={28} $bottom={15}>
      <NotesBar $align="flex-start">
        <SearchBox>
          <svg width="15" height="15" viewBox="0 0 15 15" fill="none" stroke="#3a4654" strokeWidth="1.300" strokeLinecap="round" aria-hidden="true">
            <circle cx="7" cy="7" r="5.300" /><path d="M11 11l2.500 2.500" />
          </svg>
          <input type="search" placeholder="Search" aria-label="Search notes" />
        </SearchBox>
        <GreyButton>Create Note</GreyButton>
      </NotesBar>
      <NoteRow>
        <NoteCircle>
          <svg width="20" height="20" viewBox="0 0 20 20" fill="none" stroke="currentColor" strokeWidth="1.600" aria-hidden="true">
            <path d="M2 2.500h16v15.500l-3-3.500H2z" strokeLinejoin="round" />
            <path d="M4.800 6.500h1.600M8 6.500h7M4.800 10h1.600M8 10h7" />
          </svg>
        </NoteCircle>
        <NoteText>
          <NoteAuthor $gap={3}>
            <Avatar>S</Avatar>Sonar Developer
            <svg width="9" height="11" viewBox="0 0 9 11" fill="none" stroke="#b3b9c1" aria-hidden="true">
              <path d="M4.500 .7L8.300 1.300V6c0 2-1.600 3.300-3.800 4.300C2.300 9.300.7 8 .7 6V1.300z" />
            </svg>
          </NoteAuthor>
          <NoteSmall $top={2}>4 days ago</NoteSmall>
          <NoteBody>Test Note 123</NoteBody>
          <NoteSmall $top={5}>Last edited by Sonar Developer on November 28, 2024 8:24PM</NoteSmall>
        </NoteText>
        <NoteActions>
          <PlainIconButton aria-label="Note options">
            <svg width="16" height="16" viewBox="0 0 16 16" fill="currentColor" aria-hidden="true">
              <circle cx="3.500" cy="8" r="1.300" /><circle cx="8" cy="8" r="1.300" /><circle cx="12.500" cy="8" r="1.300" />
            </svg>
          </PlainIconButton>
          <PlainIconButton aria-label="Open note"><Stroke size={12} width={3} d="M9 5l7 7-7 7" /></PlainIconButton>
        </NoteActions>
      </NoteRow>
      <Pagination pages={1} results={1} />
    </Padded>
  </Section>
);

const LinkLine = styled(Inline)`
  height: 20px;
  margin: 0 0 28px 14px;
`;

const TabBar = styled.div`
  display: grid;
  grid-template-columns: 1fr 1fr;
`;

const Tab = styled.button<{ $active?: boolean }>`
  height: 50px;
  padding: 0 0 2px;
  border: 0;
  border-bottom: 3px solid ${(p) => (p.$active ? "#40b6fb" : "#f4f5f6")};
  background: ${(p) => (p.$active ? "#d6f2ff" : "#fff")};
  color: ${(p) => (p.$active ? "#44556a" : "#7b8794")};
  font-size: ${(p) => (p.$active ? 13 : 14)}px;
  font-weight: ${(p) => (p.$active ? 600 : 400)};
`;

const LogRow = styled.li`
  display: flex;
  align-items: center;
  justify-content: space-between;
  height: 78px;
  padding: 0 30px 0 28px;
  border-bottom: 1px solid #ebedef;
  color: #4a5160;
  &:last-child { border-bottom-color: transparent; }
  b { font-weight: 600; }
`;

const LogMeta = styled(Inline)`
  a { color: #4b7ea6; }
`;

const LogChevron = styled(PlainIconButton)`
  margin-left: 8px;
  padding-bottom: 3px;
`;

type LogEntry = { kind: string; subject: string; verb?: string; by?: string; when: string };
const LOGS: LogEntry[] = [
  { kind: "Action on Event", subject: "Add one-time transaction", when: "3 hours ago" },
  { kind: "Event", subject: "Add one-time transaction", verb: "Changed", when: "3 hours ago" },
  { kind: "Event", subject: "Add one-time transaction", verb: "Created", by: "Sonar Developer", when: "4 days ago" },
  { kind: "Invoice", subject: "Invoice #71", verb: "Changed", by: "Sonar Developer", when: "4 days ago" },
  { kind: "Invoice", subject: "Invoice #35", verb: "Changed", by: "Sonar Developer", when: "4 days ago" },
];

const LogList = styled.ul`
  padding-bottom: 14px;
`;

const Logs = () => (
  <Section title="Logs" action={<PrimaryButton $height={17} $pad={10} $size={11}>View All And Filter</PrimaryButton>}>
    <TabBar role="tablist">
      <Tab role="tab" aria-selected $active>Action History</Tab>
      <Tab role="tab" aria-selected={false}>View History</Tab>
    </TabBar>
    <Padded $top={26} $bottom={15}>
      <LogList>
        {LOGS.map((l, i) => (
          <LogRow key={i}>
            <span>{l.kind} <b>{l.subject}</b>{l.verb ? ` ${l.verb}` : ""}</span>
            <LogMeta $gap={5} $size={10}>
              {l.by && <><a href="#user">{l.by}</a><GoIcon size={12} /></>}
              <span>{l.when}</span>
              <LogChevron aria-label="Expand entry"><Chevron /></LogChevron>
            </LogMeta>
          </LogRow>
        ))}
      </LogList>
      <Pagination pages={10} results={47} open />
    </Padded>
  </Section>
);

const Table = styled.table`
  width: 100%;
  border-collapse: separate;
  border-spacing: 0;
  table-layout: fixed;
  th {
    height: 52px;
    padding: 0 16px;
    background: #dee1e6;
    color: #3b4654;
    font-size: 10px;
    font-weight: 500;
    letter-spacing: 1px;
    text-align: left;
  }
  th:first-child { border-radius: 4px 0 0 4px; }
  th:last-child { border-radius: 0 4px 4px 0; width: 197px; }
  td { padding: 0; }
`;

export default function App() {
  return (
    <>
      <GlobalStyle />
      <Frame>
        <Header>
          <HeaderTop>
            <div>
              <AccountName>Rigoberto Ratke</AccountName>
              <TagRow>
                <HeaderTag><Dot $color="#2c8c5a" $size={15} />Active</HeaderTag>
                <HeaderTag><Dot $color="#2b78ab" $size={15} />Residential</HeaderTag>
                <HeaderTag $muted>[No Groups]</HeaderTag>
              </TagRow>
            </div>
            <SplitButton label="Edit" primary />
          </HeaderTop>
          <InfoBar>
            <InfoItem $gap={5}><InfoLabel>ID</InfoLabel>3</InfoItem>
            <InfoItem $gap={3}><PinIcon size={13} height={16} color="#fff" width={2.4} />263 SOUTH ST, WAUKESHA, Wisconsin 53186</InfoItem>
            <InfoItem $gap={6}><InfoLabel>Local time</InfoLabel>12:40PM (CST)</InfoItem>
            <InfoItem $gap={8}><MailIcon />hillary82@example.org</InfoItem>
            <a href="#portal" aria-label="Open customer portal"><ExternalIcon color="#1b5588" /></a>
          </InfoBar>
        </Header>
        <Body>
          <SideNav aria-label="Account">
            <NavLink href="#overview" $active>Overview</NavLink>
            {["Billing", "Network & Inventory", "Tickets", "Jobs", "Correspondence", "Contacts", "Custom Fields", "All Logs"].map((n) => (
              <NavLink key={n} href="#section">{n}</NavLink>
            ))}
          </SideNav>
          <Main>
            <Toolbar>
              <PrimaryButton $height={38} $pad={18}><LockIcon />Edit View</PrimaryButton>
            </Toolbar>
            <Columns>
              <Column>
                <Balance />
                <DataService />
                <DataUsage />
                <Addresses />
                <PrimaryContact />
                <Section title="Files">
                  <Padded $top={27} $bottom={42}>
                    <FilesBar><GreyButton>Upload Files</GreyButton></FilesBar>
                  </Padded>
                </Section>
                <Section title="Custom Fields">
                  <Padded $top={27} $bottom={27}><EmptyText>There are no results to display</EmptyText></Padded>
                </Section>
              </Column>
              <Column>
                <DetailStats />
                <Section title="Scheduled Events">
                  <Padded $top={14} $bottom={27}>
                    <Bar>
                      <Toggle><ToggleItem $active>Upcoming</ToggleItem><ToggleItem>Completed</ToggleItem></Toggle>
                      <GreyButton>Create Scheduled Event</GreyButton>
                    </Bar>
                    <EmptyText $gap={32}>There are no results to display</EmptyText>
                  </Padded>
                </Section>
                <Notes />
                <Section title="Custom Links">
                  <Padded $top={27} $bottom={15}>
                    <LinkLine $gap={5}><ExternalIcon color="#1f5f8f" /><a href="#google">Google It</a></LinkLine>
                    <Pagination pages={1} results={1} />
                  </Padded>
                </Section>
                <Section title="Tasks">
                  <Padded $top={14} $bottom={27}>
                    <Bar>
                      <Toggle><ToggleItem $active>Incomplete</ToggleItem><ToggleItem>Complete</ToggleItem></Toggle>
                      <SplitButton label="Create Task" />
                    </Bar>
                    <EmptyText $gap={32}>No tasks found</EmptyText>
                  </Padded>
                </Section>
                <Logs />
                <Section title="Disconnection Log">
                  <Padded $top={14} $bottom={28}>
                    <Table>
                      <thead>
                        <tr><th>DISCONNECTED AT</th><th>DISCONNECTED BY</th><th>ADDRESS</th></tr>
                      </thead>
                      <tbody>
                        <tr><td colSpan={3}><EmptyText $gap={13}>There are no results to display</EmptyText></td></tr>
                      </tbody>
                    </Table>
                  </Padded>
                </Section>
              </Column>
            </Columns>
          </Main>
        </Body>
      </Frame>
    </>
  );
}
